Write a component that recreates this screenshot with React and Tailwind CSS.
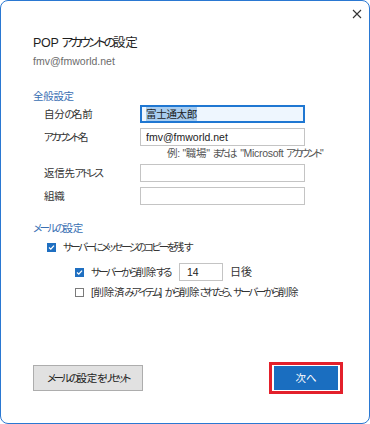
import { useState } from "react";

const font =
  "[font-family:'Liberation_Sans','Noto_Sans_CJK_JP',sans-serif] [font-feature-settings:'palt'_1]";

// kana runs are rendered narrower, like the UI font in the screenshot
function J({ t, title }) {
  const parts = t.split(/([\u3040-\u30ff]+)/);
  return (
    <>
      {parts.map((p, i) => {
        if (i % 2 === 0) {
          return (
            <span key={i} className="tracking-[-0.3px]">
              {p}
            </span>
          );
        }
        const spaced = (parts[i + 1] || "").startsWith(" ");
        let cls = title ? "tracking-[-2.6px]" : "tracking-[-2.5px]";
        if (spaced) cls += title ? " mr-[2.6px]" : " mr-[2.5px]";
        return (
          <span key={i} className={cls}>
            {p}
          </span>
        );
      })}
    </>
  );
}

function CloseIcon() {
  return (
    <svg width="10" height="10" viewBox="0 0 10 10">
      <path d="M1 1 L9 9 M9 1 L1 9" stroke="#333" strokeWidth="1.1" fill="none" />
    </svg>
  );
}

function Check({ checked, onChange }) {
  return (
    <button
      type="button"
      onClick={onChange}
      className={
        checked
          ? "w-[9px] h-[9px] shrink-0 bg-[#1f6fc1] flex items-center justify-center"
          : "w-[9px] h-[9px] shrink-0 border border-[#7a7a7a] bg-white"
      }
    >
      {checked && (
        <svg width="7" height="7" viewBox="0 0 7 7">
          <path d="M1 3.6 L2.8 5.2 L6 1.6" stroke="#fff" strokeWidth="1.3" fill="none" />
        </svg>
      )}
    </button>
  );
}

function Row({ label, children }) {
  return (
    <div className="flex items-center">
      <div className="w-[96px] shrink-0 text-[#333] whitespace-nowrap">
        <J t={label} />
      </div>
      {children}
    </div>
  );
}

export default function App() {
  const [keep, setKeep] = useState(true);
  const [del, setDel] = useState(true);
  const [delTrash, setDelTrash] = useState(false);
  const ic = "w-[165px] h-[18px] border border-[#c4c4c4] bg-white px-[5px] text-[#222] outline-none " + font;

  return (
    <div className={"w-[370px] h-[424px] bg-white border border-[#2a78d2] rounded-[8px] flex flex-col text-[10.5px] leading-[14px] text-[#333] " + font}>
      <div className="flex justify-end pt-[8px] pr-[7px]">
        <button type="button" className="w-[10px] h-[10px]">
          <CloseIcon />
        </button>
      </div>

      <div className="pl-[32px]">
        <h1 className="mt-[16px] text-[12.5px] leading-[16px] text-[#1f1f1f] whitespace-nowrap">
          <J t="POP アカウントの設定" title />
        </h1>
        <p className="mt-[3px] text-[#6b6b6b]">fmv@fmworld.net</p>

        <h2 className="mt-[21px] text-[#3a6fb3]">
          <J t="全般設定" />
        </h2>
        <div className="ml-[11px] mt-[2px] flex flex-col">
          <Row label="自分の名前">
            <div className="w-[165px] h-[18px] border-2 border-[#1f77d2] bg-[#eef6fe] px-[4px] flex items-center">
              <span className="bg-[#a9cdef] text-[#222]">
                <J t="富士通太郎" />
              </span>
            </div>
          </Row>
          <div className="mt-[5px]">
            <Row label="アカウント名">
              <input className={ic} defaultValue="fmv@fmworld.net" />
            </Row>
          </div>
          <p className="mt-[1px] pl-[123px] leading-[13px] text-[#555] whitespace-nowrap">
            <J t={'例: "職場" または "Microsoft アカウント"'} />
          </p>
          <div className="mt-[4px]">
            <Row label="返信先アドレス">
              <input className={ic} />
            </Row>
          </div>
          <div className="mt-[5px]">
            <Row label="組織">
              <input className={ic} />
            </Row>
          </div>
        </div>

        <h2 className="mt-[16px] text-[#3a6fb3]">
          <J t="メールの設定" />
        </h2>
        <div className="mt-[5px] ml-[14px] flex items-center gap-[7px]">
          <Check checked={keep} onChange={() => setKeep(!keep)} />
          <span className="whitespace-nowrap">
            <J t="サーバーにメッセージのコピーを残す" />
          </span>
        </div>
        <div className="mt-[9px] ml-[42px] flex items-center">
          <Check checked={del} onChange={() => setDel(!del)} />
          <span className="ml-[7px] w-[81px] shrink-0 whitespace-nowrap">
            <J t="サーバーから削除する" />
          </span>
          <input
            className={"ml-[7px] w-[44px] h-[18px] border border-[#c4c4c4] px-[7px] text-[#222] outline-none " + font}
            defaultValue="14"
          />
          <span className="ml-[7px] text-[11px]">日後</span>
        </div>
        <div className="mt-[4px] ml-[42px] flex items-center gap-[7px]">
          <Check checked={delTrash} onChange={() => setDelTrash(!delTrash)} />
          <span className="whitespace-nowrap">
            <J t="[削除済みアイテム] から削除されたら、サーバーから削除" />
          </span>
        </div>
      </div>

      <div className="mt-auto pb-[29px] pl-[32px] pr-[26px] flex items-center justify-between">
        <button type="button" className={"w-[110px] h-[26px] bg-[#e1e1e1] border border-[#adadad] text-[#222] whitespace-nowrap " + font}>
          <J t="メールの設定をリセット" />
        </button>
        <div className="border-[3px] border-[#e3202b] px-[2px] py-[1px]">
          <button type="button" className={"w-[64px] h-[24px] bg-[#1a6ec0] text-white " + font}>
            次へ
          </button>
        </div>
      </div>
    </div>
  );
}
